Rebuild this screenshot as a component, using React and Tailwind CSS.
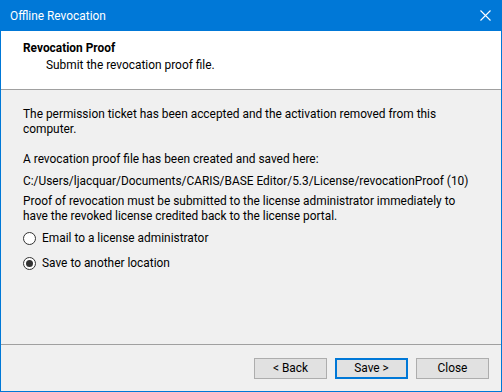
import React, { useState } from 'react';

const font = { fontFamily: 'Roboto, "Noto Sans", sans-serif' };

function Radio({ checked, label, onClick }) {
  return (
    <div className="flex items-center h-[15px] cursor-default" onClick={onClick}>
      <span className="w-[13px] h-[13px] rounded-full border border-[#333333] bg-white flex items-center justify-center">
        {checked && <span className="w-[7px] h-[7px] rounded-full bg-[#333333]" />}
      </span>
      <span className="ml-[6px]">{label}</span>
    </div>
  );
}

function Button({ children, primary }) {
  return (
    <button
      className={
        primary
          ? 'w-[73px] h-[21px] bg-[#e1e1e1] border-2 border-[#0078d7] text-black leading-none'
          : 'w-[73px] h-[21px] bg-[#e1e1e1] border border-[#adadad] text-black leading-none'
      }
    >
      {children}
    </button>
  );
}

export default function App() {
  const [mode, setMode] = useState('save');

  return (
    <div className="w-[502px] h-[392px] flex flex-col bg-[#f0f0f0] text-[11.9px] leading-[15px] text-black border-x border-b border-[#0078d7]" style={font}>
      {/* title bar */}
      <div className="h-[31px] bg-[#0078d7] flex items-center justify-between pl-[9px] pr-[9px] pt-[2px] text-white">
        <span>Offline Revocation</span>
        <svg width="11" height="11" viewBox="0 0 11 11" className="mr-[1px] mb-[2px]">
          <path d="M0.5 0.5 L10.5 10.5 M10.5 0.5 L0.5 10.5" stroke="white" strokeWidth="1.1" />
        </svg>
      </div>

      {/* header */}
      <div className="h-[59px] bg-white border-b border-[#a0a0a0] pl-[22px] pt-[10px]">
        <div className="font-bold">Revocation Proof</div>
        <div className="pl-[23px] mt-[2px]">Submit the revocation proof file.</div>
      </div>

      {/* body */}
      <div className="flex-1 pl-[22px] pt-[17px] whitespace-nowrap">
        <p>The permission ticket has been accepted and the activation removed from this<br />computer.</p>
        <p className="mt-[15px]">A revocation proof file has been created and saved here:</p>
        <p className="mt-[7px]">C:/Users/ljacquar/Documents/CARIS/BASE Editor/5.3/License/revocationProof (10)</p>
        <p className="mt-[5px]">Proof of revocation must be submitted to the license administrator immediately to<br />have the revoked license credited back to the license portal.</p>
        <div className="mt-[7px] flex flex-col gap-[10px]">
          <Radio label="Email to a license administrator" checked={mode === 'email'} onClick={() => setMode('email')} />
          <Radio label="Save to another location" checked={mode === 'save'} onClick={() => setMode('save')} />
        </div>
      </div>

      {/* footer */}
      <div className="h-[47px] border-t border-[#a0a0a0] flex justify-end gap-[8px] pt-[13px] pr-[12px]">
        <Button>&lt; Back</Button>
        <Button primary>Save &gt;</Button>
        <Button>Close</Button>
      </div>
    </div>
  );
}
